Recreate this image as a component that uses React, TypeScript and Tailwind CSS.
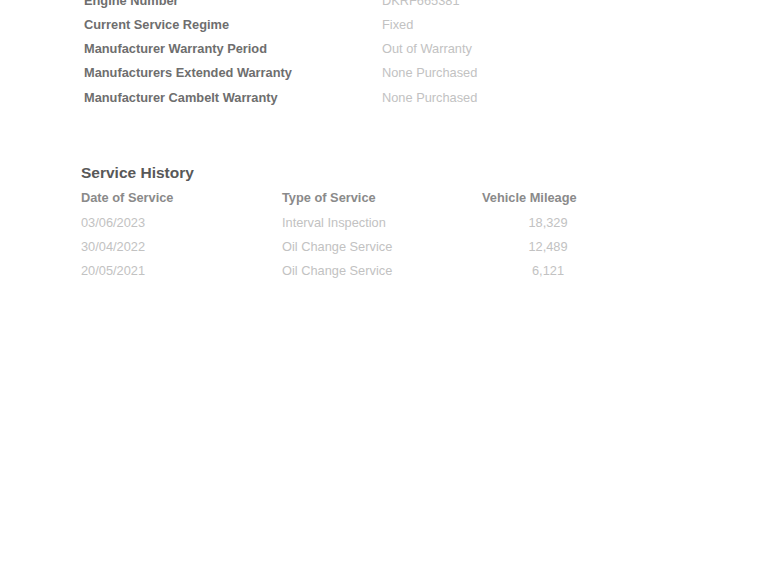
const details = [
  { label: 'Engine Number', value: 'DKRF665381' },
  { label: 'Current Service Regime', value: 'Fixed' },
  { label: 'Manufacturer Warranty Period', value: 'Out of Warranty' },
  { label: 'Manufacturers Extended Warranty', value: 'None Purchased' },
  { label: 'Manufacturer Cambelt Warranty', value: 'None Purchased' },
];

const services = [
  { date: '03/06/2023', type: 'Interval Inspection', mileage: '18,329' },
  { date: '30/04/2022', type: 'Oil Change Service', mileage: '12,489' },
  { date: '20/05/2021', type: 'Oil Change Service', mileage: '6,121' },
];

export default function App() {
  return (
    <div className="min-h-[569px] w-full overflow-hidden bg-white font-['Liberation_Sans',Arial,sans-serif] text-[12.8px]">
      {/* vehicle details, scrolled so the first row is cut off */}
      <div className="-mt-[12px] pl-[84px]">
        {details.map((d) => (
          <div key={d.label} className="flex h-[24.3px] items-center">
            <span className="w-[298px] font-bold text-[#6e6e6e]">{d.label}</span>
            <span className="text-[#c2c2c2]">{d.value}</span>
          </div>
        ))}
      </div>

      <div className="mt-[52px] pl-[81px]">
        <h2 className="h-[24px] text-[15.5px] font-bold leading-[24px] text-[#585858]">Service History</h2>
        <div className="flex h-[25px] items-center font-bold text-[#8a8a8a]">
          <span className="w-[201px]">Date of Service</span>
          <span className="w-[200px]">Type of Service</span>
          <span>Vehicle Mileage</span>
        </div>
        {services.map((s) => (
          <div key={s.date} className="flex h-[24.2px] items-center text-[#c2c2c2]">
            <span className="w-[201px]">{s.date}</span>
            <span className="w-[200px]">{s.type}</span>
            <span className="w-[132px] text-center">{s.mileage}</span>
          </div>
        ))}
      </div>
    </div>
  );
}
